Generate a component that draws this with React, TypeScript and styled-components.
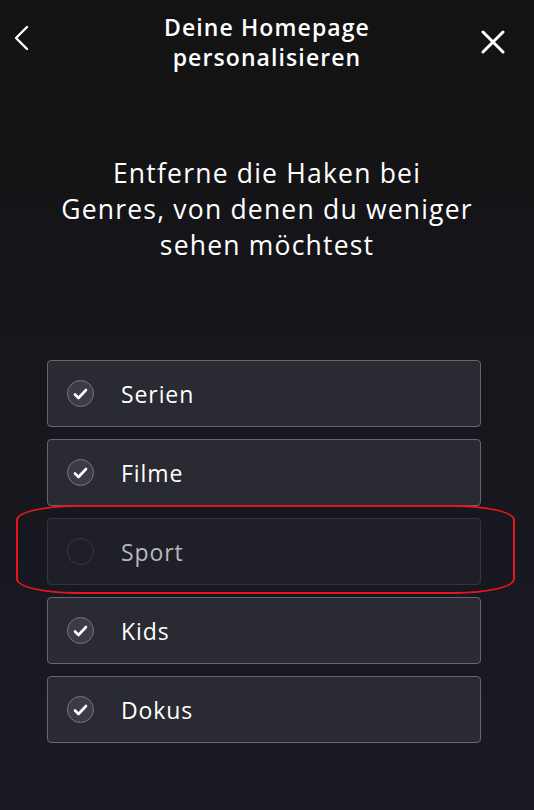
import React from "react";
import styled, { createGlobalStyle } from "styled-components";

const GlobalStyle = createGlobalStyle`
    html, body {
        margin: 0;
        padding: 0;
        background: #131313;
    }
    * {
        box-sizing: border-box;
    }
`;

const Screen = styled.div`
    position: relative;
    width: 534px;
    height: 810px;
    overflow: hidden;
    background: linear-gradient(180deg, #131313 0%, #151519 30%, #1a1a25 100%);
    font-family: "Open Sans", "Noto Sans", sans-serif;
    color: #ffffff;
`;

const Header = styled.div`
    display: grid;
    grid-template-columns: 60px 1fr 60px;
    align-items: center;
    height: 84px;
`;

const HeaderTitle = styled.h1`
    margin: 0;
    margin-top: -1px;
    font-size: 23px;
    font-weight: 600;
    line-height: 30px;
    text-align: center;
    letter-spacing: 1.1px;
`;

const IconButton = styled.button<{ $side: "left" | "right" }>`
    display: flex;
    align-items: center;
    justify-content: ${(p) => (p.$side === "left" ? "flex-start" : "flex-end")};
    padding: 0;
    padding-left: ${(p) => (p.$side === "left" ? "13px" : "0")};
    padding-right: ${(p) => (p.$side === "right" ? "29px" : "0")};
    background: none;
    border: none;
    color: #ffffff;
    height: 40px;
    margin-top: ${(p) => (p.$side === "left" ? "-8px" : "0")};
`;

const Intro = styled.p`
    margin: 71px auto 0;
    width: 500px;
    font-size: 26.5px;
    font-weight: 400;
    line-height: 36px;
    text-align: center;
    letter-spacing: 1.2px;
`;

const GenreList = styled.div`
    display: flex;
    flex-direction: column;
    gap: 12px;
    margin: 97px 0 0 47px;
    width: 434px;
`;

const GenreRow = styled.div<{ $checked: boolean }>`
    display: flex;
    align-items: center;
    height: 67px;
    padding-left: 19px;
    border-radius: 4px;
    border: 1.5px solid ${(p) => (p.$checked ? "#66666e" : "#34343c")};
    background: ${(p) => (p.$checked ? "#2a2a32" : "#1f1f27")};
`;

const CheckCircle = styled.span<{ $checked: boolean }>`
    display: flex;
    align-items: center;
    justify-content: center;
    width: 27px;
    height: 27px;
    border-radius: 50%;
    border: 1.5px solid ${(p) => (p.$checked ? "#77777f" : "#3a3a42")};
    background: ${(p) => (p.$checked ? "#3c3c44" : "transparent")};
`;

const GenreName = styled.span<{ $checked: boolean }>`
    margin-left: 27px;
    font-size: 23px;
    font-weight: 400;
    letter-spacing: 0.9px;
    color: ${(p) => (p.$checked ? "#ffffff" : "#b8b8bc")};
`;

const Highlight = styled.div`
    position: absolute;
    left: 16px;
    top: 505px;
    width: 499px;
    height: 89px;
    border: 2.5px solid #e8151d;
    border-radius: 60px / 15px;
    pointer-events: none;
`;

const genres = [
    { name: "Serien", checked: true },
    { name: "Filme", checked: true },
    { name: "Sport", checked: false },
    { name: "Kids", checked: true },
    { name: "Dokus", checked: true },
];

const App: React.FC = () => {
    return (
        <Screen>
            <GlobalStyle />
            <Header>
                <IconButton $side="left" aria-label="Zurück">
                    <svg width="18" height="26" viewBox="0 0 18 26">
                        <path d="M14 2 L3 13 L14 24" fill="none" stroke="#fff" strokeWidth="2.4" strokeLinecap="round" strokeLinejoin="round" />
                    </svg>
                </IconButton>
                <HeaderTitle>
                    Deine Homepage
                    <br />
                    personalisieren
                </HeaderTitle>
                <IconButton $side="right" aria-label="Schließen">
                    <svg width="24" height="24" viewBox="0 0 24 24">
                        <path d="M2 2 L22 22 M22 2 L2 22" fill="none" stroke="#fff" strokeWidth="3" strokeLinecap="round" />
                    </svg>
                </IconButton>
            </Header>
            <Intro>
                Entferne die Haken bei
                <br />
                Genres, von denen du weniger
                <br />
                sehen möchtest
            </Intro>
            <GenreList>
                {genres.map((genre) => (
                    <GenreRow key={genre.name} $checked={genre.checked}>
                        <CheckCircle $checked={genre.checked}>
                            {genre.checked && (
                                <svg width="15" height="12" viewBox="0 0 15 12">
                                    <path d="M2 6.5 L5.5 10 L13 2" fill="none" stroke="#fff" strokeWidth="2.6" strokeLinecap="round" strokeLinejoin="round" />
                                </svg>
                            )}
                        </CheckCircle>
                        <GenreName $checked={genre.checked}>{genre.name}</GenreName>
                    </GenreRow>
                ))}
            </GenreList>
            <Highlight />
        </Screen>
    );
};

export default App;
